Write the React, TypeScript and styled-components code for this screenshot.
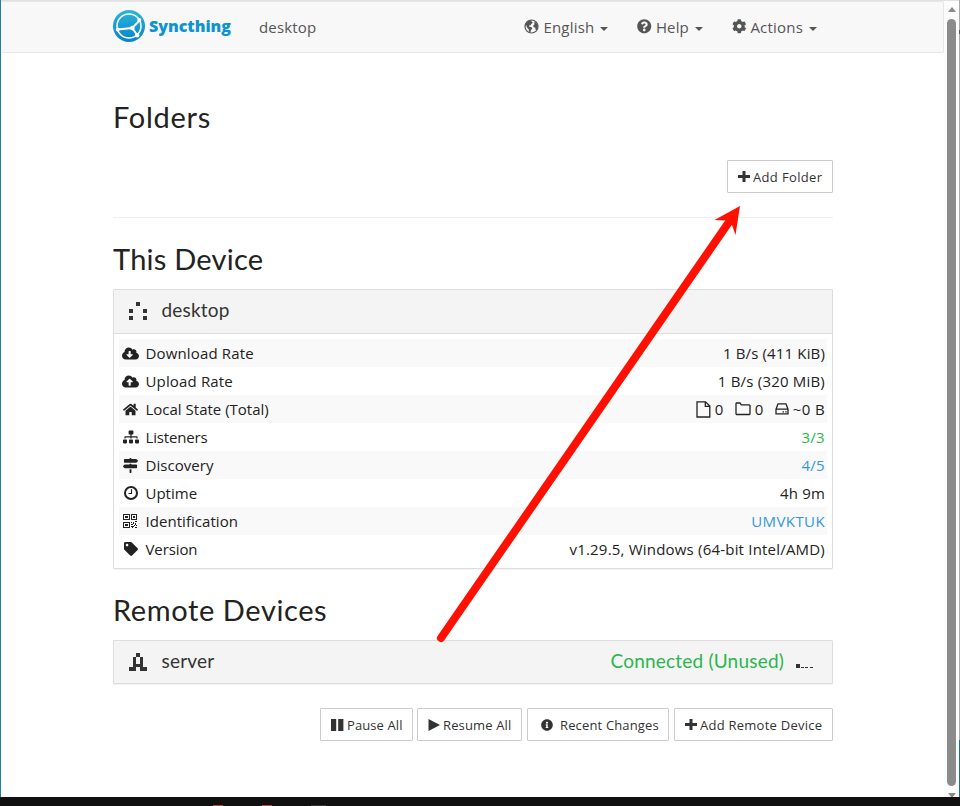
import React from "react";
import styled, { createGlobalStyle } from "styled-components";
import {
  FaCloudDownloadAlt, FaCloudUploadAlt, FaHome, FaSitemap, FaMapSigns, FaTag,
  FaQuestionCircle, FaCog, FaInfoCircle,
} from "react-icons/fa";

const GlobalStyle = createGlobalStyle`
  * { box-sizing: border-box; }
  body { margin: 0; background: #fff; overflow: hidden; }
  h3, h4, p { margin: 0; font-weight: 400; }
  svg { display: block; flex: none; }
`;

const Page = styled.div`
  position: relative;
  width: 960px;
  height: 806px;
  display: flex;
  flex-direction: column;
  font-family: "Open Sans", "Noto Sans", sans-serif;
  font-size: 15px;
  color: #222;
`;
const Window = styled.div`
  height: 797px;
  display: flex;
  border-left: 1px solid #1f80ae;
`;
const Content = styled.div`
  width: 943px;
  display: flex;
  flex-direction: column;
  border-top: 1px solid #e1e1e1;
`;
const Navbar = styled.nav`
  height: 52px;
  padding: 0 126px 0 112px;
  display: flex;
  align-items: center;
  background: #f8f8f8;
  border: 1px solid #e6e6e6;
  border-left: 0;
  border-radius: 2px;
  color: #555;
`;
const Brand = styled.div`
  width: 146px;
  display: flex;
  gap: 4px;
  align-items: center;
  margin-top: -3px;
  font: 800 16px/32px "Open Sans", sans-serif;
  color: #0f92d0;
`;
const Label = styled.span<{ $track?: number }>`
  letter-spacing: ${(p) => p.$track ?? 0.15}px;
  white-space: nowrap;
`;
const DeviceName = styled(Label)`
  flex: 1;
  margin-top: -1px;
`;
const NavMenu = styled.div`
  display: flex;
  gap: 29px;
  margin-top: -1px;
`;
const NavItem = styled.div`
  display: flex;
  align-items: center;
  gap: 4px;
  height: 22px;
`;
const Caret = styled.i`
  margin: 4px 0 0 2px;
  border: 4px solid transparent;
  border-top-color: #555;
  border-bottom: 0;
`;
const Main = styled.main`
  width: 720px;
  margin-left: 112px;
  display: flex;
  flex-direction: column;
`;
const Heading = styled.h3<{ $top: number; $track: number }>`
  margin: ${(p) => p.$top}px 0 0;
  height: 34px;
  font: 400 29px/34px Lato, sans-serif;
  letter-spacing: ${(p) => p.$track}px;
`;
const Actions = styled.div<{ $top: number }>`
  margin-top: ${(p) => p.$top}px;
  display: flex;
  justify-content: flex-end;
  gap: 4px;
`;
const Button = styled.button<{ $width: number; $gap?: number; $inset?: number }>`
  width: ${(p) => p.$width}px;
  height: 33px;
  padding: 0 0 0 ${(p) => p.$inset ?? 10}px;
  display: flex;
  align-items: center;
  gap: ${(p) => p.$gap ?? 3}px;
  border: 1px solid #ccc;
  border-radius: 1px;
  background: #fff;
  color: #333;
  font: 400 13px "Open Sans", sans-serif;
  &:nth-child(3) { margin: 0 1px; }
`;
const Rule = styled.div`
  margin-top: 24px;
  height: 1px;
  background: #eee;
`;
const Panel = styled.section<{ $top: number }>`
  margin-top: ${(p) => p.$top}px;
  border: 1px solid #ddd;
  border-radius: 1px;
  box-shadow: 0 1px 1px rgba(0, 0, 0, 0.05);
`;
const PanelHeading = styled.h4<{ $height: number }>`
  height: ${(p) => p.$height}px;
  padding: 0 19px 1px 15px;
  display: flex;
  align-items: center;
  background: #f4f4f4;
  color: #333;
  font: 400 19px/24px Lato, sans-serif;
`;
const PanelName = styled(Label)`
  flex: 1;
  margin: -2px 0 0 14.5px;
`;
const Status = styled(Label)`
  margin: -2px 11px 0 0;
  color: #29b74e;
`;
const Rows = styled.div`
  padding: 5px;
  border-top: 1px solid #ddd;
`;
const Row = styled.div`
  height: 28px;
  padding: 0 2px 0 3px;
  display: flex;
  align-items: center;
  &:nth-child(odd) { background: #f9f9f9; }
`;
const RowIcon = styled.span`
  width: 17px;
  margin-right: 6.5px;
  display: flex;
  justify-content: center;
`;
const RowLabel = styled(Label)`
  flex: 1;
`;
const Value = styled(Label)<{ $color?: string }>`
  color: ${(p) => p.$color ?? "#222"};
`;
const Totals = styled.div`
  display: flex;
  align-items: center;
  letter-spacing: 0.4px;
`;
const Total = styled.span<{ $after?: number }>`
  display: flex;
  align-items: center;
  gap: 4px;
  margin-right: ${(p) => p.$after ?? 0}px;
`;
const Scrollbar = styled.div`
  width: 15px;
  display: flex;
  flex-direction: column;
  align-items: center;
  padding: 6px 0 0;
  background: #fcfcfc;
  border-top: 1px solid #e1e1e1;
`;
const Thumb = styled.div`
  width: 9px;
  height: 767px;
  margin: 7px 0;
  border-radius: 5px;
  background: #8b8b8b;
  flex: none;
`;
const ScrollArrow = styled.i<{ $down?: boolean }>`
  border: 4.5px solid transparent;
  ${(p) => (p.$down ? "border-top: 5px solid #8b8b8b; border-bottom: 0;" : "border-bottom: 5px solid #8b8b8b; border-top: 0;")}
`;
const Edge = styled.div`
  width: 1px;
  background: linear-gradient(#aaa 0 30px, #555 30px 34px, #aaa 34px 740px, #1f6f99 740px);
`;
const Taskbar = styled.div`
  height: 9px;
  display: flex;
  align-items: flex-end;
  gap: 39px;
  padding-left: 213px;
  background: #101010;
`;
const TaskIcon = styled.i<{ $color: string; $width: number }>`
  width: ${(p) => p.$width}px;
  height: 1px;
  background: ${(p) => p.$color};
`;
const Pointer = styled.svg`
  position: absolute;
  left: 0;
  top: 0;
  pointer-events: none;
`;

const Logo = () => (
  <svg width="32" height="32" viewBox="0 0 32 32">
    <defs>
      <linearGradient id="brand" x1="0" y1="0" x2="0" y2="1">
        <stop offset="0" stopColor="#2bb6da" />
        <stop offset="1" stopColor="#0882c8" />
      </linearGradient>
    </defs>
    <circle cx="16" cy="16" r="16" fill="url(#brand)" />
    <g fill="none" stroke="#fff" strokeWidth="1.5">
      <circle cx="16" cy="16" r="12" />
      <path d="M4.5 19.5L19.2 18M26.5 10.5L19.2 18L24.2 25" strokeWidth="1.9" />
    </g>
    <g fill="#fff">
      <circle cx="4.7" cy="19.5" r="1.9" />
      <circle cx="26.3" cy="10" r="2" />
      <circle cx="19.4" cy="18" r="2.3" />
      <circle cx="24.2" cy="25.3" r="2.2" />
    </g>
  </svg>
);
const Globe = () => (
  <svg width="15" height="15" viewBox="0 0 15 15">
    <circle cx="7.5" cy="7.5" r="6.5" fill="none" stroke="#555" strokeWidth="1.2" />
    <path d="M2 4.5L4.8 1.8L8 1.4L7.6 3L9 3.6L7.3 5L6.6 6.3L5 6.6L5.4 7.7L7.6 8.2L8.4 9.5L7 11L6.4 13.6L5 12.8L4.7 10.3L3 8.6L2.4 6.5L1.2 7zM10 3.2L12 3.3L13.6 6.2L13.8 8.8L12.4 11.6L11.4 10.4L11.5 8.7L9.6 8.2L9.2 6.4L10.6 5.3z" fill="#555" />
  </svg>
);
const Plus = () => (
  <svg width="12" height="12" viewBox="0 0 12 12"><path d="M4.5 0h3v4H12v3H7.5v4h-3V7H0V4h4.5z" fill="#333" /></svg>
);
const Pause = () => (
  <svg width="13" height="12" viewBox="0 0 13 12"><path d="M0 0h5.2v12H0zM7.2 0h5.2v12H7.2z" fill="#333" /></svg>
);
const Play = () => (
  <svg width="12" height="12" viewBox="0 0 12 12"><path d="M.5 0L12 6L.5 12z" fill="#333" /></svg>
);
const Clock = () => (
  <svg width="14" height="14" viewBox="0 0 14 14" fill="none" stroke="#222">
    <circle cx="7" cy="7" r="6" strokeWidth="2" />
    <path d="M7.5 3.2v4.3H4.5" strokeWidth="1.2" />
  </svg>
);
const QrCode = () => (
  <svg width="15" height="14" viewBox="0 0 15 14" shapeRendering="crispEdges">
    <path
      d="M0 0h7v6H0zM1 1v4h5V1zM8 0h6v6H8zM9 1v4h4V1zM0 8h7v6H0zM1 9v4h5V9zM2 2h3v2H2zM10 2h2v2h-2zM2 10h3v2H2zM8 8h1v1H8zM10 8h1v2h-1zM12 7h2v1h-2zM8 10h2v1H8zM12 9h1v2h-1zM8 12h3v1H8zM11 11h1v1h-1zM13 11h1v1h-1zM9 13h1v1H9zM12 13h2v1h-2z"
      fill="#222" fillRule="evenodd"
    />
  </svg>
);
const FileIcon = () => (
  <svg width="15" height="17" viewBox="0 0 15 17" fill="none" stroke="#222" strokeWidth="1.3">
    <path d="M1 .8h8.5L13.8 5v11H1zM9.3.8v4.5h4.5" />
  </svg>
);
const FolderIcon = () => (
  <svg width="16" height="14" viewBox="0 0 16 14" fill="none" stroke="#222" strokeWidth="1.3">
    <path d="M1 12V1.5L1.5 1H5l1.3 1.9h7.9l.8.7V12l-.7.5H1.6z" />
  </svg>
);
const DiskIcon = () => (
  <svg width="14" height="12" viewBox="0 0 14 12" fill="none" stroke="#222" strokeWidth="1.3">
    <path d="M1 6.2L3 .8h8l2 5.4v4.6H1zM1 6.2h12" />
    <path d="M7.5 8.8H9M10.3 8.8h1.4" />
  </svg>
);
const DesktopIdenticon = () => (
  <svg width="18" height="18" viewBox="0 0 18 18" shapeRendering="crispEdges" fill="#333">
    <path d="M7 0h4v4H7zM0 7h4v4H0zM14 7h4v4h-4zM0 14h4v4H0zM14 14h4v4h-4z" />
  </svg>
);
const ServerIdenticon = () => (
  <svg width="18" height="18" viewBox="0 0 18 18" shapeRendering="crispEdges" fill="#333">
    <path d="M7 0h4v4h3v10h4v4h-7v-4H7v4H0v-4h4V4h3zM7 4v7h4V4z" fillRule="evenodd" />
  </svg>
);
const SignalIcon = () => (
  <svg width="18" height="18" viewBox="0 0 18 18" shapeRendering="crispEdges" fill="#333">
    <path d="M1 11h4v4H1z" />
    <path d="M6 14h3v1H6zM10 14h3v1h-3zM15 14h3v1h-3z" />
  </svg>
);

type Item = { icon: React.ReactNode; label: string; track?: number; value?: string; valueTrack?: number; color?: string };

const details: Item[] = [
  { icon: <FaCloudDownloadAlt size={17} />, label: "Download Rate", value: "1 B/s (411 KiB)" },
  { icon: <FaCloudUploadAlt size={17} />, label: "Upload Rate", value: "1 B/s (320 MiB)", valueTrack: 0.2 },
  { icon: <FaHome size={15} />, label: "Local State (Total)", track: 0 },
  { icon: <FaSitemap size={16} />, label: "Listeners", track: -0.15, value: "3/3", valueTrack: 0.3, color: "#29b74e" },
  { icon: <FaMapSigns size={15} />, label: "Discovery", track: 0.05, value: "4/5", valueTrack: 0.3, color: "#3498db" },
  { icon: <Clock />, label: "Uptime", track: 0, value: "4h 9m" },
  { icon: <QrCode />, label: "Identification", track: 0.05, value: "UMVKTUK", valueTrack: 0.4, color: "#3498db" },
  { icon: <FaTag size={14} />, label: "Version", track: -0.1, value: "v1.29.5, Windows (64-bit Intel/AMD)", valueTrack: 0.2 },
];

export default function App() {
  return (
    <Page>
      <GlobalStyle />
      <Window>
        <Content>
          <Navbar>
            <Brand><Logo /><Label $track={0}>Syncthing</Label></Brand>
            <DeviceName>desktop</DeviceName>
            <NavMenu>
              <NavItem><Globe /><Label $track={0.2}>English</Label><Caret /></NavItem>
              <NavItem><FaQuestionCircle size={14.5} /><Label>Help</Label><Caret /></NavItem>
              <NavItem><FaCog size={14.5} /><Label $track={0.2}>Actions</Label><Caret /></NavItem>
            </NavMenu>
          </Navbar>
          <Main>
            <Heading $top={47} $track={0.7}>Folders</Heading>
            <Actions $top={26}>
              <Button $width={106}><Plus /><Label $track={0.35}>Add Folder</Label></Button>
            </Actions>
            <Rule />
            <Heading $top={24} $track={0.25}>This Device</Heading>
            <Panel $top={13}>
              <PanelHeading $height={43}>
                <DesktopIdenticon />
                <PanelName $track={0.2}>desktop</PanelName>
              </PanelHeading>
              <Rows>
                {details.map((d) => (
                  <Row key={d.label}>
                    <RowIcon>{d.icon}</RowIcon>
                    <RowLabel $track={d.track}>{d.label}</RowLabel>
                    {d.value ? (
                      <Value $color={d.color} $track={d.valueTrack}>{d.value}</Value>
                    ) : (
                      <Totals>
                        <Total $after={11}><FileIcon />0</Total>
                        <Total $after={11}><FolderIcon />0</Total>
                        <Total><DiskIcon />~0 B</Total>
                      </Totals>
                    )}
                  </Row>
                ))}
              </Rows>
            </Panel>
            <Heading $top={24} $track={0.6}>Remote Devices</Heading>
            <Panel $top={13}>
              <PanelHeading $height={42}>
                <ServerIdenticon />
                <PanelName $track={0.2}>server</PanelName>
                <Status $track={0.2}>Connected (Unused)</Status>
                <SignalIcon />
              </PanelHeading>
            </Panel>
            <Actions $top={24}>
              <Button $width={93}><Pause /><Label $track={0.1}>Pause All</Label></Button>
              <Button $width={105}><Play /><Label $track={0.15}>Resume All</Label></Button>
              <Button $width={142} $gap={7} $inset={13}><FaInfoCircle size={12} /><Label>Recent Changes</Label></Button>
              <Button $width={159}><Plus /><Label $track={0.25}>Add Remote Device</Label></Button>
            </Actions>
          </Main>
        </Content>
        <Scrollbar>
          <ScrollArrow />
          <Thumb />
          <ScrollArrow $down />
        </Scrollbar>
        <Edge />
      </Window>
      <Taskbar>
        <TaskIcon $color="#c4443a" $width={10} />
        <TaskIcon $color="#c4443a" $width={10} />
        <TaskIcon $color="#333" $width={15} />
      </Taskbar>
      <Pointer width="960" height="806" viewBox="0 0 960 806">
        <path d="M441 638L729 222" stroke="#ff1000" strokeWidth="8" strokeLinecap="round" />
        <path d="M740 206L714.5 220L726 220.5L732 225L735.5 235z" fill="#ff1000" />
      </Pointer>
    </Page>
  );
}
